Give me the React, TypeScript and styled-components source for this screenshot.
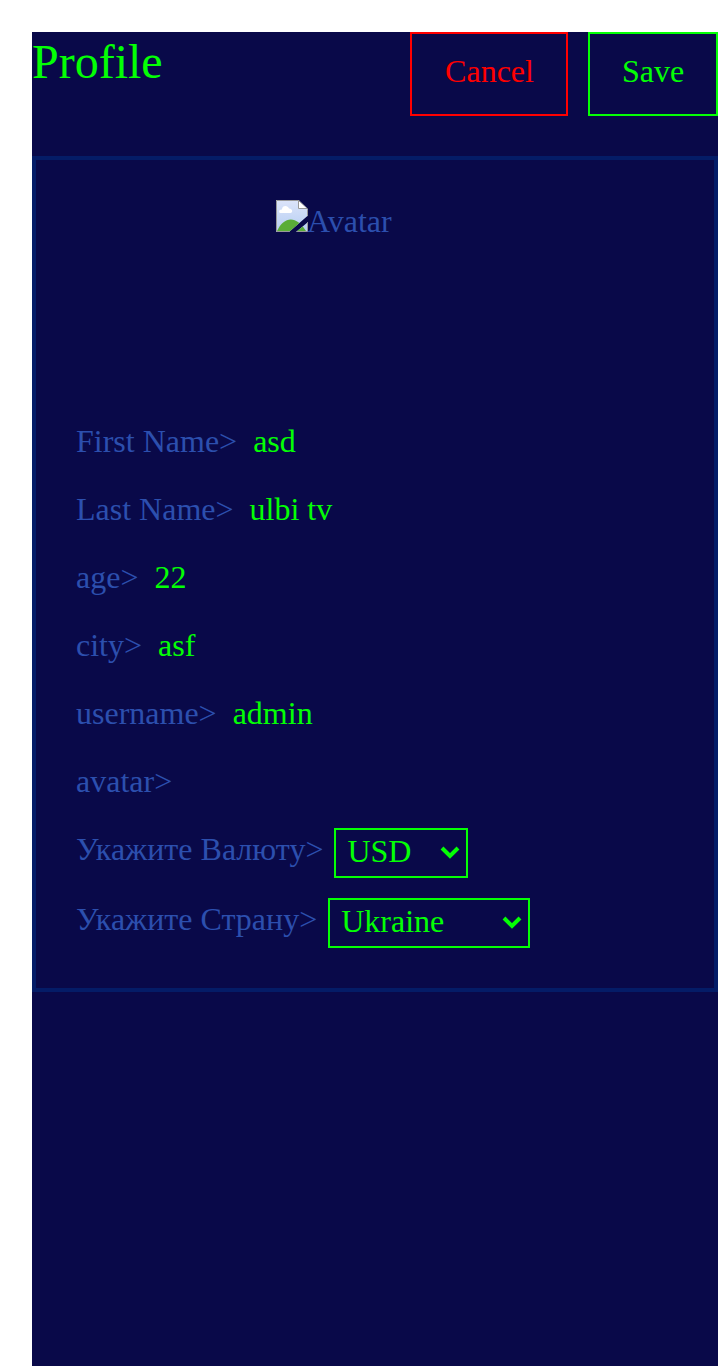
import React from "react";
import styled, { createGlobalStyle } from "styled-components";

const Global = createGlobalStyle`
  body { margin: 0; background: #fff; overflow: hidden; }
  * { box-sizing: border-box; }
`;
const Page = styled.main`
  margin: 32px 0 0 32px;
  height: 1334px;
  background: #090949;
  color: #04ff04;
  font: 32px/36px "Liberation Serif", serif;
`;
const Header = styled.header`
  display: flex;
  align-items: flex-start;
  height: 124px;
`;
const Title = styled.h1`
  margin: 2px auto 0 0;
  font-size: 48px;
  line-height: 56px;
  font-weight: 400;
`;
const Button = styled.button<{ $color: string; $width: number }>`
  width: ${(p) => p.$width}px;
  height: 84px;
  margin-left: 20px;
  padding: 0 0 6px;
  border: 2px solid ${(p) => p.$color};
  background: none;
  color: ${(p) => p.$color};
  font: inherit;
`;
const CancelButton = styled(Button)`
  padding-left: 1px;
`;
const Card = styled.section`
  height: 836px;
  padding: 40px;
  border: 4px solid #041c67;
`;
const Avatar = styled.div`
  display: flex;
  height: 200px;
  margin: 0 0 20px 200px;
  color: #2c4fae;
  line-height: 42px;
`;
const AltText = styled.span`
  margin-left: -1px;
`;
const Row = styled.div<{ $select?: boolean }>`
  display: flex;
  height: ${(p) => (p.$select ? 50 : 48)}px;
  margin-bottom: 20px;
  line-height: 42px;
`;
const Label = styled.span<{ $gap: number }>`
  margin-right: ${(p) => p.$gap}px;
  color: #2c4fae;
`;
const Select = styled.div<{ $width: number }>`
  display: flex;
  justify-content: space-between;
  width: ${(p) => p.$width}px;
  height: 50px;
  padding: 0 6px 0 11px;
  border: 2px solid #04ff04;
`;
const Arrow = styled.svg`
  margin-top: 12px;
`;
const BrokenImage = () => (
  <svg width="32" height="32" viewBox="0 0 32 32">
    <defs>
      <linearGradient id="sky" x1="0" y1="0" x2="0" y2="1">
        <stop stopColor="#dce4fa" />
        <stop offset="1" stopColor="#b5cef2" />
      </linearGradient>
      <clipPath id="sheet">
        <path d="M0 0H23L32 9V15.5L13 32H0ZM32 22V32H20Z" />
      </clipPath>
    </defs>
    <g clipPath="url(#sheet)">
      <path d="M0 0H23L32 9V32H0Z" fill="url(#sky)" />
      <path d="M5 13C2 13 3 9 6 9.5C6 5 12 5 13 8.5C17 8.5 17 13 14.5 13Z" fill="#fff" />
      <path d="M1 31C8 15.5 21 15.5 30 31Z" fill="#5aad38" />
      <path d="M.5 .5H22.5L31.5 9.5V31.5H.5Z" fill="none" stroke="#999" />
      <path d="M22.5 .5V8.5H31.5Z" fill="#fff" stroke="#999" />
    </g>
  </svg>
);
const Chevron = () => (
  <Arrow width="20" height="20" viewBox="0 0 20 20" fill="none">
    <path d="M2 6L10 14L18 6" stroke="#04ff04" strokeWidth="4" />
  </Arrow>
);
const fields = [
  ["First Name", "asd"],
  ["Last Name", "ulbi tv"],
  ["age", "22"],
  ["city", "asf"],
  ["username", "admin"],
  ["avatar", ""],
];
const selects = [
  { label: "Укажите Валюту", value: "USD", width: 134 },
  { label: "Укажите Страну", value: "Ukraine", width: 202 },
];

export default function App() {
  return (
    <>
      <Global />
      <Page>
        <Header>
          <Title>Profile</Title>
          <CancelButton $color="#f00" $width={158}>Cancel</CancelButton>
          <Button $color="#04ff04" $width={130}>Save</Button>
        </Header>
        <Card>
          <Avatar><BrokenImage /><AltText>Avatar</AltText></Avatar>
          {fields.map(([label, value]) => (
            <Row key={label}><Label $gap={16}>{label}&gt;</Label>{value}</Row>
          ))}
          {selects.map((s) => (
            <Row key={s.label} $select>
              <Label $gap={11}>{s.label}&gt;</Label>
              <Select $width={s.width}>{s.value}<Chevron /></Select>
            </Row>
          ))}
        </Card>
      </Page>
    </>
  );
}
